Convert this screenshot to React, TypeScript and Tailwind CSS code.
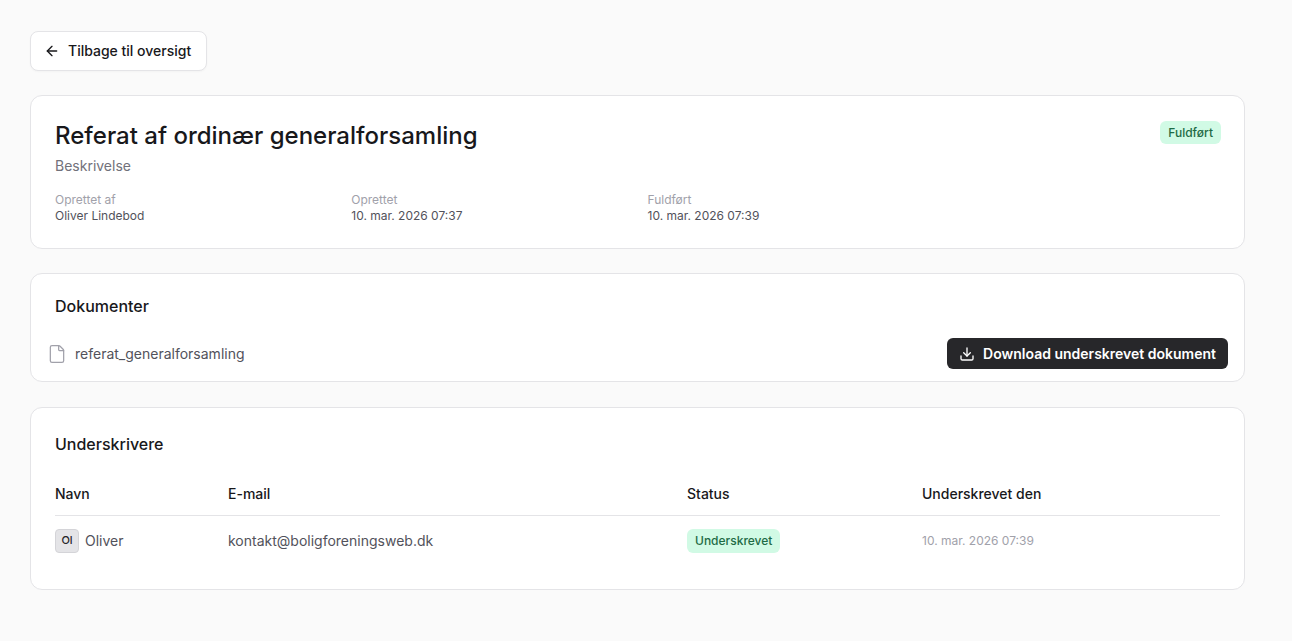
import { ArrowLeft, Download, File } from "lucide-react";

const meta = [
  { label: "Oprettet af", value: "Oliver Lindebod" },
  { label: "Oprettet", value: "10. mar. 2026 07:37" },
  { label: "Fuldført", value: "10. mar. 2026 07:39" },
];

const signers = [
  {
    initials: "Ol",
    name: "Oliver",
    email: "kontakt@boligforeningsweb.dk",
    status: "Underskrevet",
    signedAt: "10. mar. 2026 07:39",
  },
];

export default function App() {
  return (
    <div
      className="min-h-screen bg-[#fafafa] text-[#18181b]"
      style={{ fontFamily: "Inter, 'Noto Sans', sans-serif" }}
    >
      <div className="w-[1215px] ml-[30px] pt-[31px] pb-10">
        <button className="h-10 flex items-center gap-2 pl-[13px] pr-[15px] rounded-lg border border-[#e4e4e7] bg-white text-sm font-medium text-[#18181b] shadow-[0_1px_2px_rgba(0,0,0,0.03)]">
          <ArrowLeft className="h-4 w-4" strokeWidth={2} />
          Tilbage til oversigt
        </button>

        <div className="mt-6 rounded-xl border border-[#e4e4e7] bg-white p-6">
          <div className="flex items-start justify-between">
            <div>
              <h1 className="text-2xl font-medium leading-8 text-[#18181b]">
                Referat af ordinær generalforsamling
              </h1>
              <p className="mt-1 text-sm text-[#71717a]">Beskrivelse</p>
            </div>
            <span className="mt-[1px] mr-[-1px] rounded-md bg-[#d1fae5] px-2 h-[23px] flex items-center text-xs font-medium text-[#1f6b45]">
              Fuldført
            </span>
          </div>
          <div className="mt-4 grid grid-cols-4 gap-5">
            {meta.map(m => (
              <div key={m.label}>
                <div className="text-xs leading-4 text-[#a1a1aa]">{m.label}</div>
                <div className="text-xs leading-4 text-[#52525b]">{m.value}</div>
              </div>
            ))}
          </div>
        </div>

        <div className="mt-6 rounded-xl border border-[#e4e4e7] bg-white">
          <h2 className="px-6 pt-6 text-base font-medium leading-none text-[#18181b]">
            Dokumenter
          </h2>
          <div className="mt-6 px-4 pb-3 flex items-center justify-between">
            <div className="flex items-center gap-2">
              <File className="h-5 w-5 text-[#a1a1aa]" strokeWidth={1.5} />
              <span className="text-sm text-[#52525b]">referat_generalforsamling</span>
            </div>
            <button className="h-[31px] flex items-center gap-2 rounded-md bg-[#27272a] pl-3 pr-3 text-sm font-semibold text-white">
              <Download className="h-4 w-4" strokeWidth={2} />
              Download underskrevet dokument
            </button>
          </div>
        </div>

        <div className="mt-[25px] rounded-xl border border-[#e4e4e7] bg-white px-6 pt-6 pb-6">
          <h2 className="text-base font-medium leading-6 text-[#18181b]">Underskrivere</h2>
          <table className="mt-[17px] w-full text-sm">
            <thead>
              <tr className="border-b border-[#e4e4e7]">
                <th className="h-[42px] w-[173px] text-left font-medium text-[#18181b]">Navn</th>
                <th className="h-[42px] w-[459px] text-left font-medium text-[#18181b]">E-mail</th>
                <th className="h-[42px] w-[235px] text-left font-medium text-[#18181b]">Status</th>
                <th className="h-[42px] text-left font-medium text-[#18181b]">Underskrevet den</th>
              </tr>
            </thead>
            <tbody>
              {signers.map(s => (
                <tr key={s.email}>
                  <td className="h-[50px] pt-[1px]">
                    <div className="flex items-center gap-1.5">
                      <span className="h-6 w-6 flex items-center justify-center rounded-[4px] border border-[#d4d4d8] bg-[#e4e4e7] text-[11px] font-medium text-[#27272a]">
                        {s.initials}
                      </span>
                      <span className="text-[#52525b]">{s.name}</span>
                    </div>
                  </td>
                  <td className="h-[50px] pt-[1px] text-[#52525b]">{s.email}</td>
                  <td className="h-[50px] pt-[1px]">
                    <span className="inline-flex h-6 items-center rounded-md bg-[#d1fae5] px-2 text-xs font-medium text-[#1f6b45]">
                      {s.status}
                    </span>
                  </td>
                  <td className="h-[50px] pt-[1px] text-xs text-[#a1a1aa]">{s.signedAt}</td>
                </tr>
              ))}
            </tbody>
          </table>
        </div>
      </div>
    </div>
  );
}
